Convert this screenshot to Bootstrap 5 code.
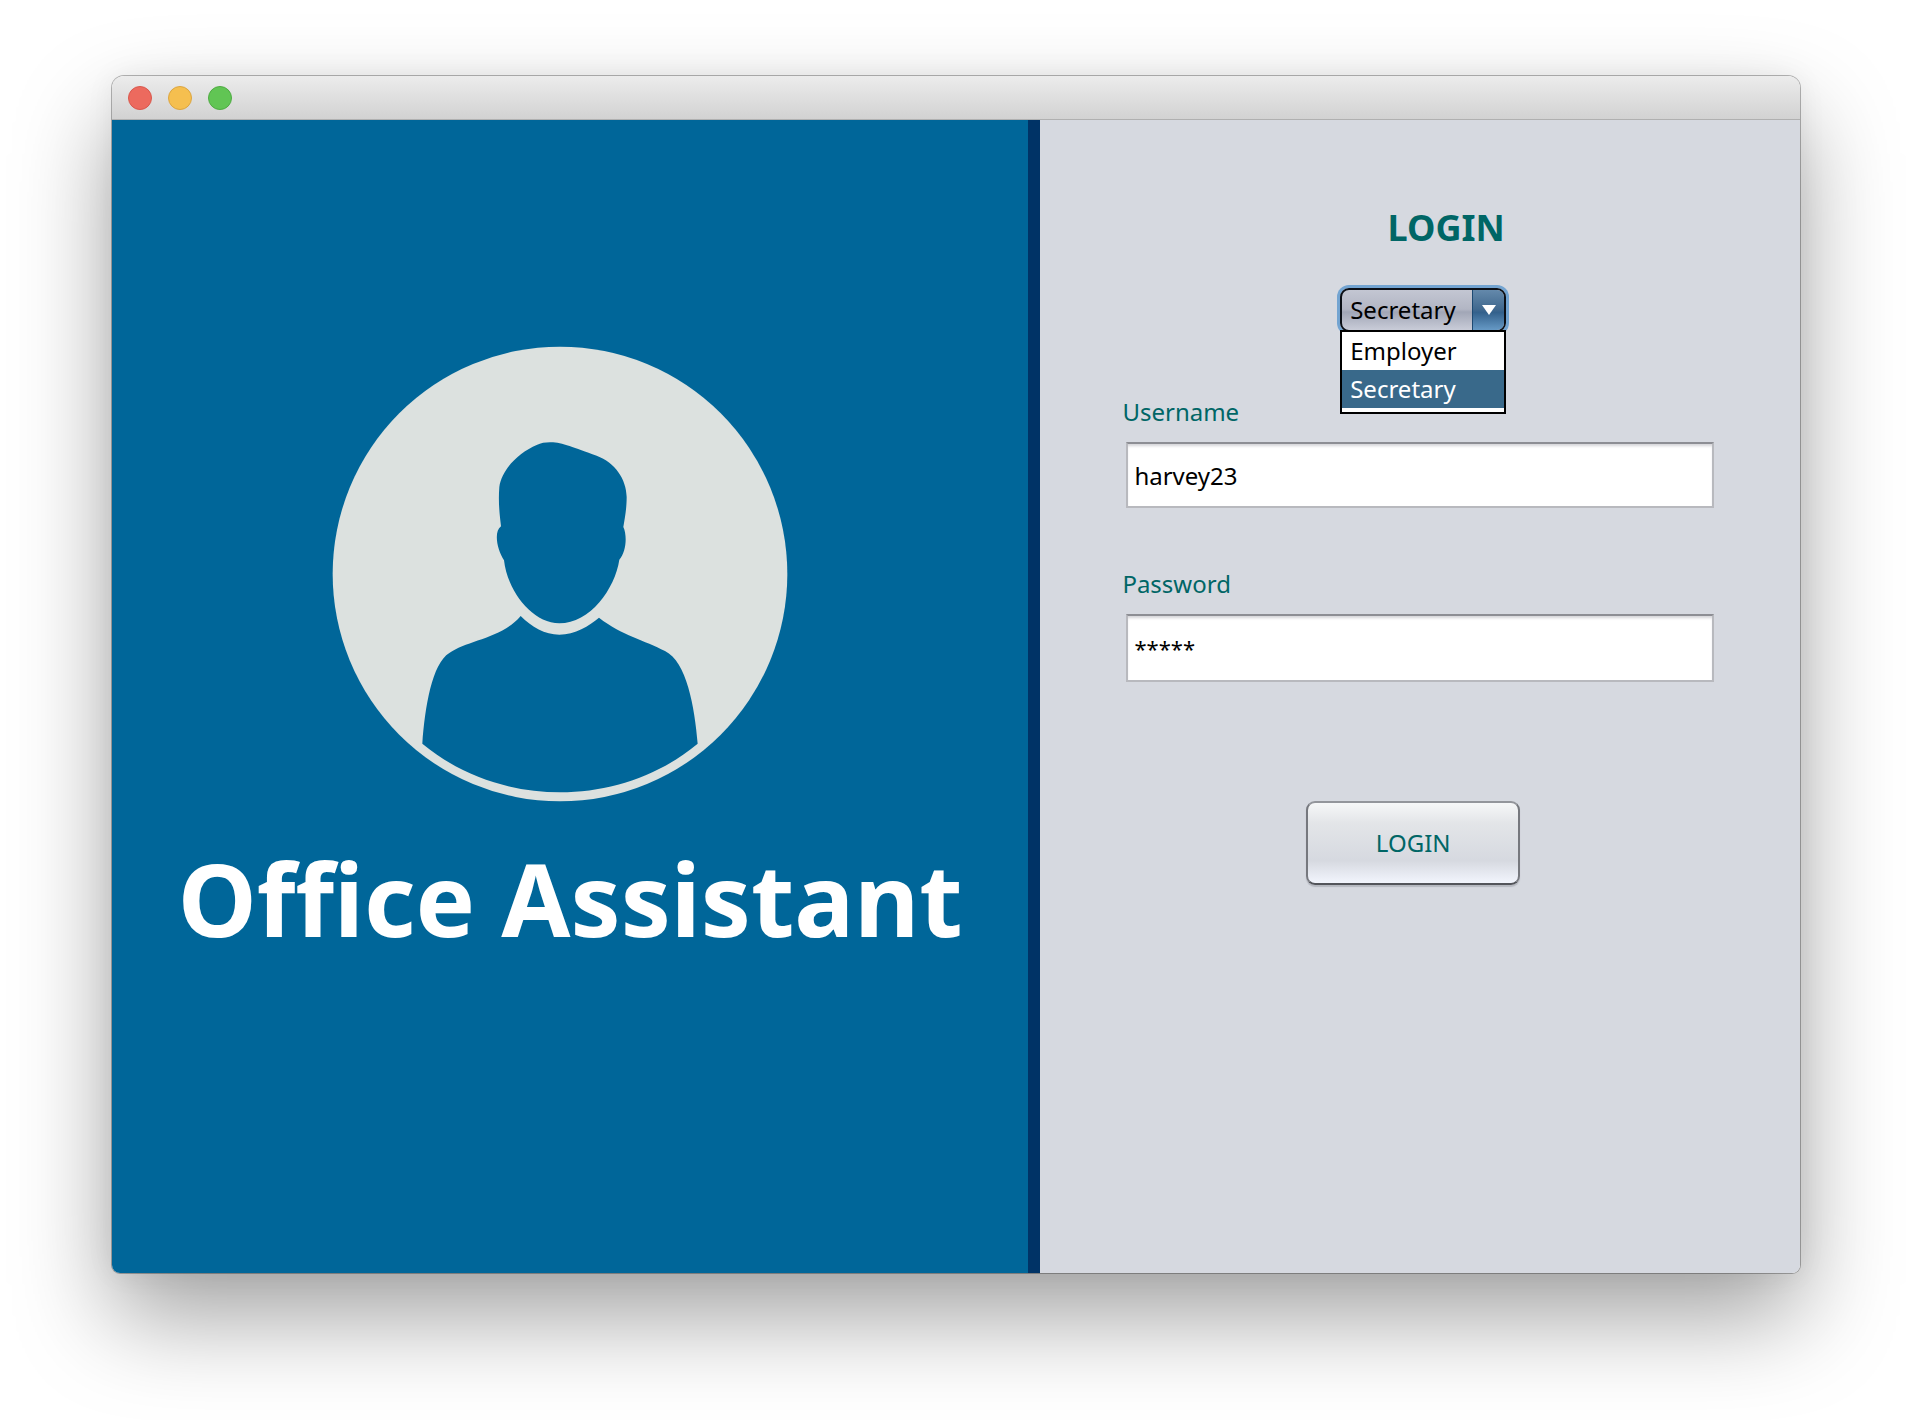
<!DOCTYPE html>
<html lang="en">
<head>
<meta charset="utf-8">
<meta name="viewport" content="width=device-width, initial-scale=1">
<title>Office Assistant</title>
<link href="https://cdn.jsdelivr.net/npm/bootstrap@5.3.0/dist/css/bootstrap.min.css" rel="stylesheet">
<style>
body { font-family: "Noto Sans", "Open Sans", sans-serif; font-size: 24px; background: #fff; padding: 76px 112px 147px; overflow-x: hidden; }
.app-window { border-radius: 12px 12px 8px 8px; box-shadow: 0 0 0 1px rgba(0,0,0,.28), 0 44px 96px rgba(0,0,0,.37), 0 0 30px rgba(0,0,0,.06); overflow: hidden; }
.title-bar { height: 44px; padding: 0 16px; gap: 16px; background: linear-gradient(#ececec, #d2d2d2); border-bottom: 1px solid #b0b0b0; }
.win-btn { width: 24px; height: 24px; border-radius: 50%; border: 1px solid; padding: 0; }
.win-close { background: #ec6a5e; border-color: #d8584d; }
.win-min { background: #f5bf4f; border-color: #dba541; }
.win-zoom { background: #61c554; border-color: #4fab43; }
.brand-pane { width: 55%; background: #006699; border-right: 12px solid #003366; padding-top: 226px; }
.avatar { width: 456px; height: 456px; margin-right: 20px; }
.brand-name { color: #fff; font-size: 100px; line-height: 120px; margin-top: 36px; white-space: nowrap; }
.login-pane { background: #d6d9e0; padding: 82px 86px 0; }
.teal { color: #006666; }
.pane-title { font-size: 36px; line-height: 52px; margin: 0 0 34px 52px; }
.role-box { width: 166px; margin-left: 6px; }
.role-select { width: 100%; height: 44px; padding: 0 8px; border: 2px solid #0b0f16; border-radius: 9px; appearance: none; line-height: 36px; color: #000;
  background: linear-gradient(to right, transparent 130px, #1d4a73 130px, #1d4a73 132px, transparent 132px) , linear-gradient(#c3c6d2, #b2b6c4 48%, #a1a6b6 55%, #c9ccd8); box-shadow: 0 0 0 3px #73a4d1; outline: 0; }
.role-arrow { top: 2px; right: 2px; width: 31px; height: 40px; border-radius: 0 7px 7px 0; background: linear-gradient(#6489ab, #41698f 48%, #33618c 56%, #6699c5); pointer-events: none; }
.role-list { top: 42px; left: 0; width: 166px; height: 84px; border: 2px solid #000; background: #fff; z-index: 2; }
.role-list li { height: 38px; line-height: 37px; padding-left: 8px; color: #000; }
.role-list li.picked { background: #39698a; color: #fff; }
.field-label { line-height: 32px; margin: 0 0 14px -4px; }
.field-box { width: 100%; height: 66px; border: 2px solid #b8b9be; border-top-color: #8d8e94; background: #fff; color: #000; padding: 0 6px; box-shadow: inset 0 3px 3px -1px #d4d4d8; outline: 0; display: block; }
.masked-box { height: 68px; font-size: 22px; }
.first-field { margin-top: 64px; }
.next-field { margin-top: 60px; }
.login-btn { width: 214px; height: 84px; margin: 119px 14px 0 0; border: 2px solid; border-color: #93959b #76787e #53555b; border-radius: 9px; background: linear-gradient(#f6f7f8, #e3e5e8 25%, #d6d9e0 72%, #f2f5fd); box-shadow: 0 2px 1px #b5b8c0; }
</style>
<script src="https://cdn.jsdelivr.net/npm/bootstrap@5.3.0/dist/js/bootstrap.bundle.min.js"></script>
</head>
<body class="min-vh-100 d-flex">
<main class="app-window d-flex flex-column flex-grow-1">
  <header class="title-bar d-flex align-items-center">
    <button class="win-btn win-close" type="button" aria-label="Close"></button>
    <button class="win-btn win-min" type="button" aria-label="Minimize"></button>
    <button class="win-btn win-zoom" type="button" aria-label="Zoom"></button>
  </header>
  <div class="d-flex flex-grow-1">
    <section class="brand-pane d-flex flex-column align-items-center flex-shrink-0">
      <svg class="avatar" viewBox="36 47 1368 1368" aria-hidden="true">
        <circle cx="720" cy="731" r="682" fill="#dce1df"/>
        <g fill="#006699">
          <path d="M690 336C725 335 760 352 830 376C885 397 919 445 920 500C920 535 915 560 910 590C922 615 919 665 898 688C885 775 810 879 718 879C635 879 562 780 552 690C532 660 520 605 543 588C540 560 534 520 538 470C545 415 600 365 650 344C663 338 675 336 690 336Z"/>
          <path d="M602 857C635 890 675 913 718 913C765 913 808 886 837 862C905 915 975 930 1035 962C1100 994 1124 1130 1133 1240C900 1435 540 1434 307 1240C315 1130 336 1000 388 968C440 930 545 925 602 857Z"/>
        </g>
      </svg>
      <h1 class="brand-name fw-bold mb-0">Office Assistant</h1>
    </section>
    <form class="login-pane d-flex flex-column align-items-stretch flex-grow-1">
      <h2 class="pane-title teal fw-bold text-center">LOGIN</h2>
      <div class="role-box position-relative align-self-center">
        <select class="role-select" aria-label="Role">
          <option>Employer</option>
          <option selected>Secretary</option>
        </select>
        <span class="role-arrow position-absolute d-flex align-items-center justify-content-center">
          <svg width="14" height="10" viewBox="0 0 14 10" aria-hidden="true"><path d="M0 0H14L7 10Z" fill="#fff"/></svg>
        </span>
        <ul class="role-list position-absolute list-unstyled mb-0">
          <li>Employer</li>
          <li class="picked">Secretary</li>
        </ul>
      </div>
      <div class="first-field">
        <label class="field-label teal d-block" for="username">Username</label>
        <input class="field-box" id="username" type="text" value="harvey23">
      </div>
      <div class="next-field">
        <label class="field-label teal d-block" for="password">Password</label>
        <input class="field-box masked-box" id="password" type="text" value="*****" autocomplete="off">
      </div>
      <button class="login-btn teal align-self-center" type="submit">LOGIN</button>
    </form>
  </div>
</main>
</body>
</html>
